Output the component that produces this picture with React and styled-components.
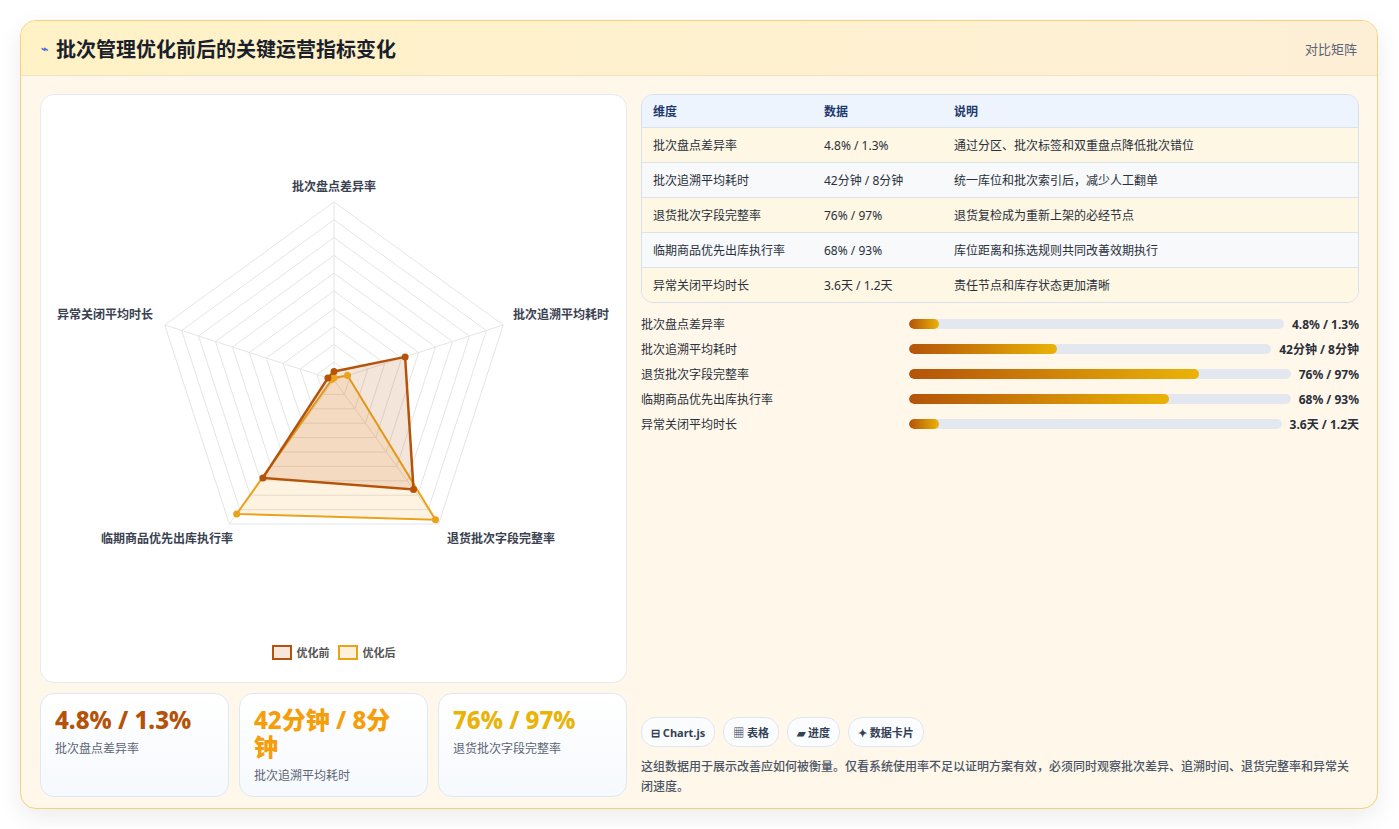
import React from 'react';
import styled, { createGlobalStyle } from 'styled-components';

const Global = createGlobalStyle`
  body { margin: 0; background: #ffffff; font-family: "Noto Sans", "Noto Sans CJK SC", sans-serif; }
`;

const Page = styled.div`
  padding: 20px 21px 20px 20px;
  height: 829px;
  box-sizing: border-box;
`;

const Panel = styled.div`
  height: 789px;
  box-sizing: border-box;
  border: 1px solid #f3d27e;
  border-radius: 16px;
  background: #fff8ea;
  box-shadow: 0 8px 24px rgba(0,0,0,0.08);
  display: flex;
  flex-direction: column;
  overflow: hidden;
`;

const Header = styled.div`
  height: 54px;
  flex-shrink: 0;
  display: flex;
  align-items: center;
  justify-content: space-between;
  padding: 0 20px;
  background: linear-gradient(90deg, #fff2c6, #fdefd6);
  border-bottom: 1px solid #f0e2c2;
`;

const Title = styled.h1`
  margin: 0;
  font-size: 20px;
  font-weight: 700;
  color: #1a1f2b;
  display: flex;
  align-items: center;
  gap: 8px;
`;

const HeaderTag = styled.span`
  font-size: 13px;
  color: #5b6476;
`;

const Body = styled.div`
  flex: 1;
  display: grid;
  grid-template-columns: 587px 1fr;
  gap: 14px;
  padding: 18px 18px 18px 19px;
  min-height: 0;
`;

const LeftCol = styled.div`
  display: flex;
  flex-direction: column;
  gap: 10px;
`;

const ChartCard = styled.div`
  height: 587px;
  background: #fff;
  border: 1px solid #e6e9ef;
  border-radius: 14px;
  position: relative;
`;

const Stats = styled.div`
  display: grid;
  grid-template-columns: repeat(3, 1fr);
  gap: 10px;
  flex: 1;
`;

const StatCard = styled.div`
  border: 1px solid #dde8f5;
  border-radius: 14px;
  background: linear-gradient(180deg, #ffffff, #f6f9fd);
  padding: 12px 14px;
`;

const StatValue = styled.div`
  font-size: 24px;
  font-weight: 800;
  line-height: 27px;
  color: ${p => p.color};
`;

const StatLabel = styled.div`
  margin-top: 6px;
  font-size: 12px;
  color: #5b6476;
`;

const RightCol = styled.div`
  display: flex;
  flex-direction: column;
`;

const Table = styled.div`
  border: 1px solid #d6dfeb;
  border-radius: 12px;
  overflow: hidden;
`;

const Row = styled.div`
  display: grid;
  grid-template-columns: 171px 130px 1fr;
  height: 35px;
  align-items: center;
  padding-left: 11px;
  font-size: 12px;
  color: ${p => (p.head ? '#1e3a6e' : '#2a2f3a')};
  font-weight: ${p => (p.head ? 600 : 400)};
  background: ${p => (p.head ? '#edf4fd' : p.alt ? '#f7f9fb' : '#fdf7e4')};
  border-top: ${p => (p.first ? 'none' : '1px solid #dde3ea')};
  height: ${p => (p.head ? '32px' : '34px')};
`;

const Bars = styled.div`
  margin-top: 12px;
  display: flex;
  flex-direction: column;
  gap: 7px;
`;

const BarRow = styled.div`
  display: flex;
  align-items: center;
  gap: 8px;
  height: 18px;
  font-size: 12px;
  color: #2a2f3a;
`;

const BarLabel = styled.div`
  width: 260px;
  flex-shrink: 0;
`;

const Track = styled.div`
  flex: 1;
  height: 10px;
  border-radius: 5px;
  background: #e3e8f0;
  overflow: hidden;
`;

const Fill = styled.div`
  height: 100%;
  border-radius: 5px;
  background: linear-gradient(90deg, #b45309, #eab308);
`;

const BarValue = styled.div`
  font-weight: 700;
  white-space: nowrap;
`;

const Spacer = styled.div`
  flex: 1;
`;

const Chips = styled.div`
  display: flex;
  gap: 8px;
`;

const Chip = styled.span`
  display: inline-flex;
  align-items: center;
  gap: 4px;
  height: 28px;
  padding: 0 9px;
  border: 1px solid #e1e6ee;
  border-radius: 14px;
  background: #fbfcfe;
  font-size: 11px;
  font-weight: 700;
  color: #334155;
`;

const Note = styled.p`
  margin: 10px 0 0;
  font-size: 12px;
  line-height: 20px;
  color: #4b5566;
  font-weight: 500;
`;

const Legend = styled.div`
  position: absolute;
  left: 0;
  right: 0;
  bottom: 22px;
  display: flex;
  justify-content: center;
  gap: 8px;
  font-size: 11px;
  font-weight: 700;
  color: #555;
`;

const LegendItem = styled.span`
  display: inline-flex;
  align-items: center;
  gap: 5px;
`;

const Swatch = styled.span`
  width: 16px;
  height: 11px;
  border: 2.5px solid ${p => p.c};
  background: ${p => p.bg};
`;

const rows = [
  ['批次盘点差异率', '4.8% / 1.3%', '通过分区、批次标签和双重盘点降低批次错位'],
  ['批次追溯平均耗时', '42分钟 / 8分钟', '统一库位和批次索引后，减少人工翻单'],
  ['退货批次字段完整率', '76% / 97%', '退货复检成为重新上架的必经节点'],
  ['临期商品优先出库执行率', '68% / 93%', '库位距离和拣选规则共同改善效期执行'],
  ['异常关闭平均时长', '3.6天 / 1.2天', '责任节点和库存状态更加清晰'],
];
const fills = [8, 41, 76, 68, 8];
const labels = ['批次盘点差异率', '批次追溯平均耗时', '退货批次字段完整率', '临期商品优先出库执行率', '异常关闭平均时长'];
const before = [4.8, 42, 76, 68, 3.6];
const after = [1.3, 8, 97, 93, 1.2];

const cx = 293, cy = 285, R = 178;
const pt = (i, v) => {
  const a = -Math.PI / 2 + (i * 2 * Math.PI) / 5;
  return [cx + Math.cos(a) * R * v / 100, cy + Math.sin(a) * R * v / 100];
};
const poly = vals => vals.map((v, i) => pt(i, v).join(',')).join(' ');
const labelPos = [
  { x: 293, y: 96, a: 'middle' },
  { x: 520, y: 224, a: 'middle' },
  { x: 460, y: 448, a: 'middle' },
  { x: 126, y: 448, a: 'middle' },
  { x: 64, y: 224, a: 'middle' },
];

const Radar = () => (
  <svg width="587" height="540">
    {Array.from({ length: 10 }, (_, k) => (
      <polygon key={k} points={poly([0, 1, 2, 3, 4].map(() => (k + 1) * 10))} fill="none" stroke="#e5e5e5" strokeWidth="1" />
    ))}
    {[0, 1, 2, 3, 4].map(i => {
      const [x, y] = pt(i, 100);
      return <line key={i} x1={cx} y1={cy} x2={x} y2={y} stroke="#e5e5e5" />;
    })}
    <polygon points={poly(after)} fill="rgba(245,158,11,0.12)" stroke="#eaa21a" strokeWidth="2" />
    <polygon points={poly(before)} fill="rgba(180,83,9,0.15)" stroke="#b45309" strokeWidth="2.5" />
    {after.map((v, i) => { const [x, y] = pt(i, v); return <circle key={'a' + i} cx={x} cy={y} r="3.5" fill="#eaa21a" />; })}
    {before.map((v, i) => { const [x, y] = pt(i, v); return <circle key={'b' + i} cx={x} cy={y} r="3.5" fill="#b45309" />; })}
    {labels.map((l, i) => (
      <text key={l} x={labelPos[i].x} y={labelPos[i].y} textAnchor={labelPos[i].a} fontSize="12" fontWeight="700" fill="#3a4150" fontFamily="Noto Sans, Noto Sans CJK SC, sans-serif">{l}</text>
    ))}
  </svg>
);

export default function App() {
  return (
    <Page>
      <Global />
      <Panel>
        <Header>
          <Title><span style={{ fontSize: 12, color: '#4f6fd8' }}>⌁</span>批次管理优化前后的关键运营指标变化</Title>
          <HeaderTag>对比矩阵</HeaderTag>
        </Header>
        <Body>
          <LeftCol>
            <ChartCard>
              <div style={{ paddingTop: 0, marginTop: 0 }}><div style={{ height: 0 }} /></div>
              <svgWrap />
              <div style={{ paddingTop: 0 }}><Radar /></div>
              <Legend>
                <LegendItem><Swatch c="#b45309" bg="#f7e6dc" />优化前</LegendItem>
                <LegendItem><Swatch c="#eaa21a" bg="#fdf1dc" />优化后</LegendItem>
              </Legend>
            </ChartCard>
            <Stats>
              <StatCard><StatValue color="#b45309">4.8% / 1.3%</StatValue><StatLabel>批次盘点差异率</StatLabel></StatCard>
              <StatCard><StatValue color="#f59e0b">42分钟 / 8分钟</StatValue><StatLabel>批次追溯平均耗时</StatLabel></StatCard>
              <StatCard><StatValue color="#eab308">76% / 97%</StatValue><StatLabel>退货批次字段完整率</StatLabel></StatCard>
            </Stats>
          </LeftCol>
          <RightCol>
            <Table>
              <Row head first><span>维度</span><span>数据</span><span>说明</span></Row>
              {rows.map((r, i) => (
                <Row key={r[0]} alt={i % 2 === 1}><span>{r[0]}</span><span>{r[1]}</span><span>{r[2]}</span></Row>
              ))}
            </Table>
            <Bars>
              {rows.map((r, i) => (
                <BarRow key={r[0]}>
                  <BarLabel>{r[0]}</BarLabel>
                  <Track><Fill style={{ width: fills[i] + '%' }} /></Track>
                  <BarValue>{r[1]}</BarValue>
                </BarRow>
              ))}
            </Bars>
            <Spacer />
            <Chips>
              <Chip>⊟ Chart.js</Chip>
              <Chip>▦ 表格</Chip>
              <Chip>▰ 进度</Chip>
              <Chip>✦ 数据卡片</Chip>
            </Chips>
            <Note>这组数据用于展示改善应如何被衡量。仅看系统使用率不足以证明方案有效，必须同时观察批次差异、追溯时间、退货完整率和异常关闭速度。</Note>
          </RightCol>
        </Body>
      </Panel>
    </Page>
  );
}
